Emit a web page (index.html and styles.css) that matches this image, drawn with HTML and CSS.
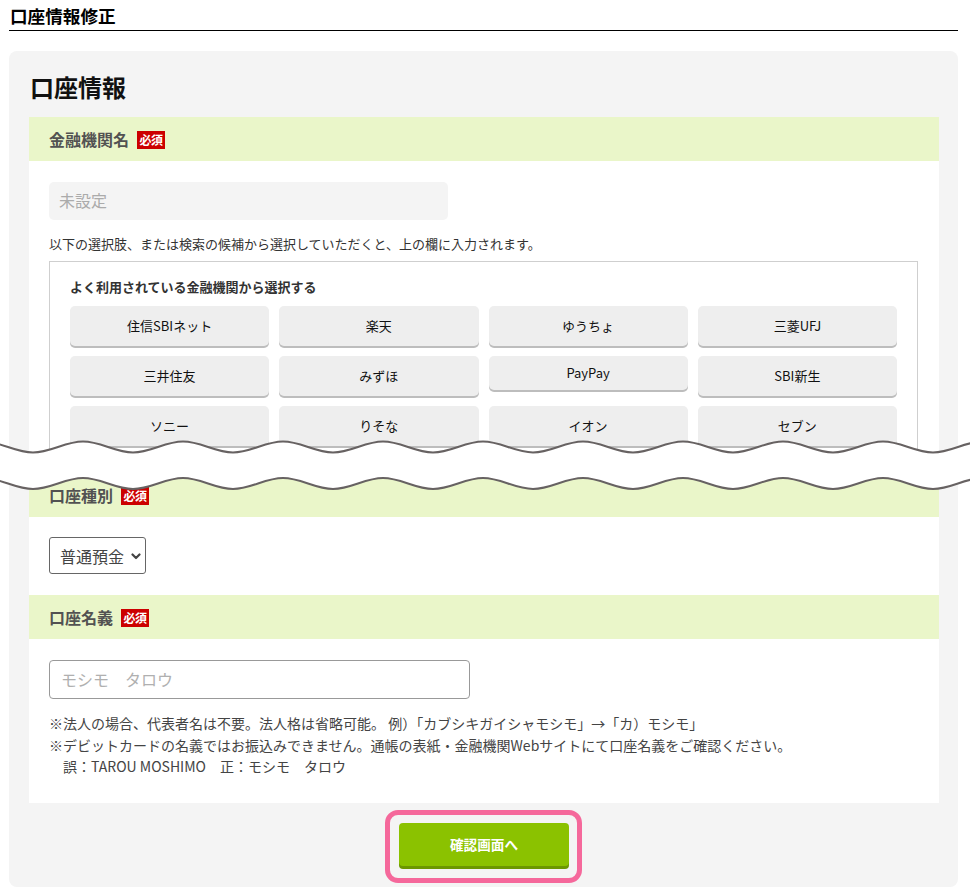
FILE: index.html
```html
<!DOCTYPE html>
<html lang="ja">
<head>
<meta charset="utf-8">
<title>口座情報修正</title>
<link rel="stylesheet" href="styles.css">
</head>
<body>
<div class="page">
  <h1 class="page-title">口座情報修正</h1>
  <div class="card">
    <h2 class="card-title">口座情報</h2>
    <div class="form">
      <div class="field">
        <div class="field-head"><span class="field-label">金融機関名</span><span class="badge">必須</span></div>
        <div class="field-body field-body--torn">
          <input class="fake-input" type="text" placeholder="未設定" readonly>
          <p class="help">以下の選択肢、または検索の候補から選択していただくと、上の欄に入力されます。</p>
          <div class="bank-box">
            <p class="bank-box-title">よく利用されている金融機関から選択する</p>
            <div class="bank-grid">
              <button class="bank-btn" type="button">住信SBIネット</button>
              <button class="bank-btn" type="button">楽天</button>
              <button class="bank-btn" type="button">ゆうちょ</button>
              <button class="bank-btn" type="button">三菱UFJ</button>
              <button class="bank-btn" type="button">三井住友</button>
              <button class="bank-btn" type="button">みずほ</button>
              <button class="bank-btn bank-btn--short" type="button">PayPay</button>
              <button class="bank-btn" type="button">SBI新生</button>
              <button class="bank-btn" type="button">ソニー</button>
              <button class="bank-btn" type="button">りそな</button>
              <button class="bank-btn" type="button">イオン</button>
              <button class="bank-btn" type="button">セブン</button>
            </div>
          </div>
        </div>
      </div>
      <div class="field">
        <div class="field-head"><span class="field-label">口座種別</span><span class="badge">必須</span></div>
        <div class="field-body field-body--select">
          <div class="select-wrap">
            <select class="select">
              <option>普通預金</option>
              <option>当座預金</option>
            </select>
            <svg class="select-arrow" width="10" height="7" viewBox="0 0 10 7"><path d="M1.5 1.5 L5 5 L8.5 1.5" fill="none" stroke="#444" stroke-width="2.2" stroke-linecap="round" stroke-linejoin="round"/></svg>
          </div>
        </div>
      </div>
      <div class="field">
        <div class="field-head"><span class="field-label">口座名義</span><span class="badge">必須</span></div>
        <div class="field-body field-body--name">
          <input class="text-input" type="text" placeholder="モシモ　タロウ">
          <p class="notes">※法人の場合、代表者名は不要。法人格は省略可能。 例）「カブシキガイシャモシモ」→「カ）モシモ」<br>※デビットカードの名義ではお振込みできません。通帳の表紙・金融機関Webサイトにて口座名義をご確認ください。<br>　誤：TAROU MOSHIMO　正：モシモ　タロウ</p>
        </div>
      </div>
    </div>
    <div class="actions">
      <button class="submit" type="button">確認画面へ</button>
    </div>
  </div>
</div>
<svg class="tear" width="970" height="57" viewBox="0 0 970 57">
  <path fill="#fff" d="M -67 15.5 C -49 15.5 -35 4.5 -17 4.5 S 15 15.5 33 15.5 S 65 4.5 83 4.5 S 115 15.5 133 15.5 S 165 4.5 183 4.5 S 215 15.5 233 15.5 S 265 4.5 283 4.5 S 315 15.5 333 15.5 S 365 4.5 383 4.5 S 415 15.5 433 15.5 S 465 4.5 483 4.5 S 515 15.5 533 15.5 S 565 4.5 583 4.5 S 615 15.5 633 15.5 S 665 4.5 683 4.5 S 715 15.5 733 15.5 S 765 4.5 783 4.5 S 815 15.5 833 15.5 S 865 4.5 883 4.5 S 915 15.5 933 15.5 S 965 4.5 983 4.5 S 1015 15.5 1033 15.5 L 1033 52 C 1015 52 1001 41 983 41 S 951 52 933 52 S 901 41 883 41 S 851 52 833 52 S 801 41 783 41 S 751 52 733 52 S 701 41 683 41 S 651 52 633 52 S 601 41 583 41 S 551 52 533 52 S 501 41 483 41 S 451 52 433 52 S 401 41 383 41 S 351 52 333 52 S 301 41 283 41 S 251 52 233 52 S 201 41 183 41 S 151 52 133 52 S 101 41 83 41 S 51 52 33 52 S 1 41 -17 41 S -49 52 -67 52 Z"/>
  <path fill="none" stroke="#676262" stroke-width="2" d="M -67 15.5 C -49 15.5 -35 4.5 -17 4.5 S 15 15.5 33 15.5 S 65 4.5 83 4.5 S 115 15.5 133 15.5 S 165 4.5 183 4.5 S 215 15.5 233 15.5 S 265 4.5 283 4.5 S 315 15.5 333 15.5 S 365 4.5 383 4.5 S 415 15.5 433 15.5 S 465 4.5 483 4.5 S 515 15.5 533 15.5 S 565 4.5 583 4.5 S 615 15.5 633 15.5 S 665 4.5 683 4.5 S 715 15.5 733 15.5 S 765 4.5 783 4.5 S 815 15.5 833 15.5 S 865 4.5 883 4.5 S 915 15.5 933 15.5 S 965 4.5 983 4.5 S 1015 15.5 1033 15.5"/>
  <path fill="none" stroke="#676262" stroke-width="2" d="M 1033 52 C 1015 52 1001 41 983 41 S 951 52 933 52 S 901 41 883 41 S 851 52 833 52 S 801 41 783 41 S 751 52 733 52 S 701 41 683 41 S 651 52 633 52 S 601 41 583 41 S 551 52 533 52 S 501 41 483 41 S 451 52 433 52 S 401 41 383 41 S 351 52 333 52 S 301 41 283 41 S 251 52 233 52 S 201 41 183 41 S 151 52 133 52 S 101 41 83 41 S 51 52 33 52 S 1 41 -17 41 S -49 52 -67 52"/>
</svg>
</body>
</html>
```

FILE: styles.css
```css
* {
  box-sizing: border-box;
}

html,
body {
  margin: 0;
  padding: 0;
  background: #fff;
}

body {
  width: 970px;
  font-family: "Noto Sans CJK JP", "Noto Sans", sans-serif;
  color: #333;
}

.page {
  width: 949px;
  margin-left: 9px;
}

.page-title {
  margin: 0;
  padding: 4px 0 2px 1px;
  font-size: 17.6px;
  line-height: 24px;
  font-weight: 700;
  color: #000;
  border-bottom: 1px solid #000;
}

.card {
  margin-top: 20px;
  background: #f4f4f4;
  border-radius: 8px;
  padding: 20px 19px 21px 20px;
}

.card-title {
  margin: 0 0 14px 1px;
  font-size: 24px;
  line-height: 32px;
  font-weight: 700;
  color: #111;
}

.form {
  background: #fff;
}

.field-head {
  height: 44px;
  background: #eaf6c9;
  display: flex;
  align-items: center;
  gap: 8px;
  padding-left: 20px;
}

.field-label {
  font-size: 16px;
  line-height: 20px;
  font-weight: 700;
  color: #525252;
}

.badge {
  display: inline-block;
  width: 28px;
  height: 18px;
  margin-top: 2px;
  background: #cc0000;
  color: #fff;
  font-size: 12px;
  line-height: 18px;
  font-weight: 700;
  text-align: center;
  letter-spacing: -0.5px;
}

.field-body {
  padding: 21px 21px 0 20px;
}

.field-body--torn {
  height: 312px;
  overflow: hidden;
}

.field-body--select {
  padding: 20px 20px 21px;
}

.field-body--name {
  padding: 21px 20px 25px;
}

.fake-input {
  display: block;
  width: 399px;
  height: 38px;
  border: 0;
  border-radius: 5px;
  background: #f4f4f4;
  padding: 0 10px 2px;
  font-family: inherit;
  font-size: 16px;
  color: #333;
  outline: none;
}

.fake-input::placeholder {
  color: #ababab;
}

.help {
  margin: 14px 0 7px;
  font-size: 13px;
  line-height: 20px;
  color: #333;
}

.bank-box {
  border: 1px solid #cfcfcf;
  padding: 16px 20px 20px;
}

.bank-box-title {
  margin: 0 0 10px;
  font-size: 13px;
  line-height: 18px;
  font-weight: 700;
  color: #333;
}

.bank-grid {
  display: grid;
  grid-template-columns: repeat(4, 1fr);
  gap: 10px;
  align-items: start;
}

.bank-btn {
  height: 40px;
  border: 0;
  border-radius: 5px;
  background: #eeeeee;
  box-shadow: 0 2px 0 #bdbdbd;
  font-family: inherit;
  font-size: 13px;
  line-height: 20px;
  color: #111;
  padding: 0;
}

.bank-btn--short {
  height: 34px;
}

.select-wrap {
  position: relative;
  display: inline-block;
}

.select {
  display: block;
  width: 97px;
  height: 37px;
  border: 1px solid #666;
  border-radius: 3px;
  background: #fff;
  padding: 0 0 0 10px;
  font-family: inherit;
  font-size: 16px;
  color: #444;
  appearance: none;
  -webkit-appearance: none;
  outline: none;
}

.select-arrow {
  position: absolute;
  right: 5px;
  top: 16px;
  pointer-events: none;
}

.text-input {
  display: block;
  width: 421px;
  height: 39px;
  border: 1px solid #999;
  border-radius: 4px;
  background: #fff;
  padding: 0 11px 2px;
  font-family: inherit;
  font-size: 16px;
  color: #333;
  outline: none;
}

.text-input::placeholder {
  color: #b0b0b0;
}

.notes {
  margin: 14px 0 0;
  font-size: 14px;
  line-height: 21.5px;
  color: #444;
}

.actions {
  display: flex;
  justify-content: center;
  margin-top: 20px;
}

.submit {
  position: relative;
  width: 170px;
  height: 43px;
  border: 0;
  border-radius: 4px;
  background: #8bc200;
  box-shadow: 0 3px 0 #6c9700;
  color: #fff;
  font-family: inherit;
  font-size: 13.6px;
  font-weight: 700;
  padding: 0;
}

.submit::after {
  content: "";
  position: absolute;
  top: -13px;
  left: -14px;
  right: -13px;
  bottom: -17px;
  border: 5px solid #f5689b;
  border-radius: 13px;
  pointer-events: none;
}

.tear {
  position: absolute;
  top: 437px;
  left: 0;
  display: block;
}
```
